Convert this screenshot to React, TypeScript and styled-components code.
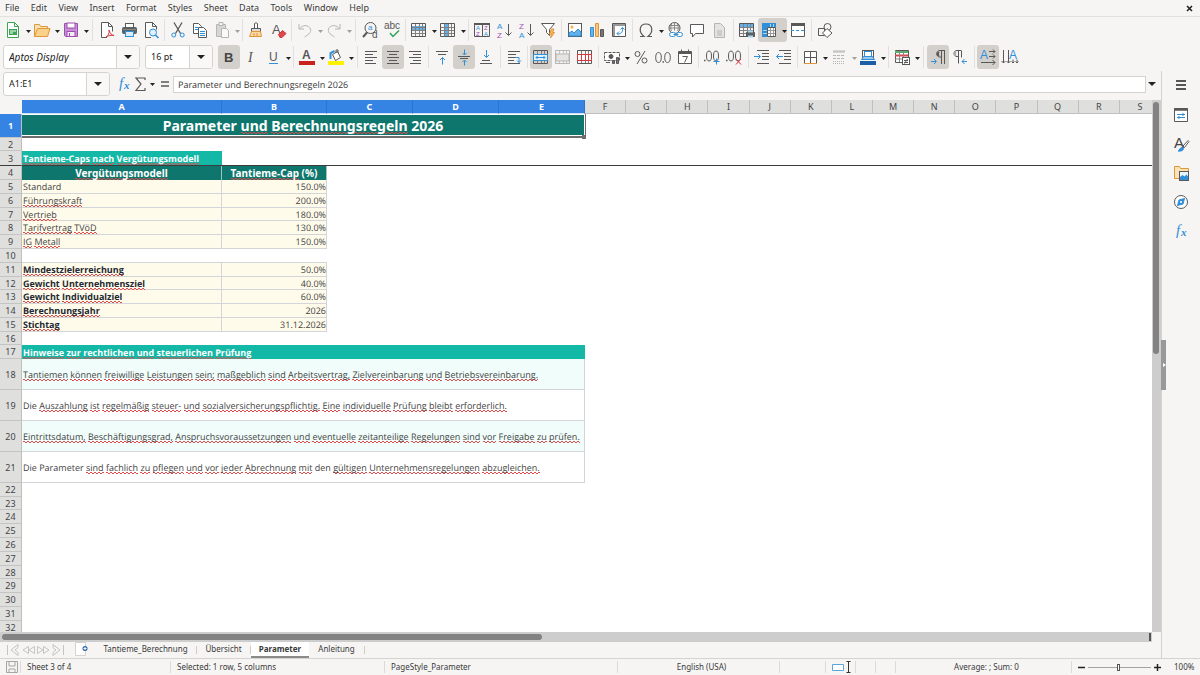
import React from "react";
import styled, { createGlobalStyle, css } from "styled-components";

const GlobalStyle = createGlobalStyle`
  * { box-sizing: border-box; }
  body { margin: 0; background: #f6f5f4; }
  button, input, select { font: inherit; color: inherit; margin: 0; }
`;

const ink = "#585858";
const blue = "#2f8fd8";
const rule = "#d5d3d0";

const App_ = styled.div`
  display: flex;
  flex-direction: column;
  height: 100vh;
  overflow: hidden;
  background: #f6f5f4;
  color: #3a3a3a;
  font: 9px/12px "Noto Sans", sans-serif;
`;

const MenuBar = styled.nav`
  display: flex;
  align-items: center;
  justify-content: space-between;
  height: 17px;
  padding: 0 7px 0 5px;
  border-bottom: 1px solid #e3e1df;
`;
const MenuList = styled.div`
  display: flex;
  justify-content: space-between;
  width: 364px;
`;
const MenuItem = styled.button`
  border: 0;
  padding: 0;
  background: none;
`;
const CloseButton = styled.button`
  display: flex;
  border: 0;
  padding: 0;
  background: none;
`;

const Toolbar = styled.div<{ $tall?: boolean }>`
  display: flex;
  flex: none;
  align-items: center;
  height: ${(p) => (p.$tall ? 28 : 26)}px;
  padding-left: ${(p) => (p.$tall ? 3 : 2)}px;
`;
const Sep = styled.span<{ $w?: number }>`
  flex: none;
  width: ${(p) => p.$w ?? 5}px;
  height: 22px;
  background: linear-gradient(#e2e0de, #e2e0de) center / 1px 100% no-repeat;
`;
const IconButton = styled.button<{ $on?: boolean; $off?: boolean }>`
  display: flex;
  flex: none;
  align-items: center;
  justify-content: center;
  width: 22px;
  height: 24px;
  border: 0;
  border-radius: 3px;
  padding: 0;
  background: ${(p) => (p.$on ? "#d3d0cc" : "none")};
  opacity: ${(p) => (p.$off ? 0.4 : 1)};
`;
const Split = styled.span<{ $on?: boolean; $off?: boolean }>`
  display: flex;
  flex: none;
  border-radius: 3px;
  background: ${(p) => (p.$on ? "#d3d0cc" : "none")};
  opacity: ${(p) => (p.$off ? 0.4 : 1)};
`;
const ArrowButton = styled.button`
  display: flex;
  align-items: center;
  justify-content: flex-end;
  width: 7px;
  height: 24px;
  border: 0;
  padding: 2px 0 0;
  background: none;
`;
const Combo = styled.div<{ $w: number; $gap?: number }>`
  display: flex;
  flex: none;
  width: ${(p) => p.$w}px;
  height: 24px;
  margin-right: ${(p) => p.$gap ?? 0}px;
  border: 1px solid ${rule};
  border-radius: 3px;
  background: #fff;
  overflow: hidden;
  button {
    display: flex;
    flex: none;
    align-items: center;
    justify-content: center;
    width: 23px;
    border: 0;
    border-left: 1px solid ${rule};
    padding: 0;
    background: #f9f8f7;
  }
`;
const ComboInput = styled.input<{ $italic?: boolean }>`
  flex: 1;
  min-width: 0;
  border: 0;
  padding: 0 0 0 5px;
  background: none;
  color: #222;
  font-size: ${(p) => (p.$italic ? 10 : 9)}px;
  font-style: ${(p) => (p.$italic ? "italic" : "normal")};
`;

const Middle = styled.div`
  display: flex;
  flex: 1;
  min-height: 0;
`;
const Workspace = styled.main`
  display: flex;
  flex: 1;
  flex-direction: column;
  min-width: 0;
`;
const FormulaBar = styled.div`
  display: flex;
  flex: none;
  align-items: center;
  height: 29px;
  padding: 0 4px 3px 3px;
`;
const FormulaInput = styled.input`
  flex: 1;
  min-width: 0;
  height: 17px;
  border: 1px solid ${rule};
  padding: 0 4px;
  background: #fff;
  font-family: "Open Sans", "Noto Sans", sans-serif;
  text-rendering: geometricPrecision;
`;
const FormulaIcon = styled.button<{ $w: number }>`
  display: flex;
  flex: none;
  align-items: center;
  justify-content: center;
  width: ${(p) => p.$w}px;
  height: 22px;
  border: 0;
  padding: 0;
  background: none;
`;

const SheetRow = styled.div`
  display: flex;
  flex: 1;
  min-height: 0;
`;
const SheetView = styled.div`
  flex: 1;
  min-width: 0;
  overflow: hidden;
  background: #fff;
`;
const VScroll = styled.div`
  width: 9px;
  padding: 2px 2px 0 1px;
  background: #cdcdcd;
`;
const VThumb = styled.div`
  height: calc(48% - 2px);
  border-radius: 3px;
  background: #818281;
`;
const HScroll = styled.div`
  display: flex;
  flex: none;
  align-items: center;
  justify-content: space-between;
  height: 10px;
  margin-right: 9px;
  padding: 0 1px 0 2px;
  background: #cdcdcd;
`;
const HThumb = styled.div`
  width: 47%;
  height: 6px;
  border-radius: 3px;
  background: #818281;
`;
const SplitGrip = styled.div`
  width: 2px;
  height: 8px;
  background: #555;
`;

const Grid = styled.table`
  width: 100%;
  table-layout: fixed;
  border-collapse: separate;
  border-spacing: 0;
  color: #444;
  line-height: 11px;
  td, th { padding: 0; white-space: nowrap; }
  td { font-family: "Open Sans", "Noto Sans", sans-serif; text-rendering: geometricPrecision; }
`;
const GridRow = styled.tr<{ $h: number; $frozen?: boolean }>`
  height: ${(p) => p.$h}px;
  ${(p) => p.$frozen && css`
    && > * { border-bottom: 1px solid #3c3c3c; }
  `}
`;
const ColHead = styled.th<{ $on?: boolean; $clipped?: boolean }>`
  border-right: 1px solid ${(p) => (p.$on ? "#2a76cf" : "#bfbfbe")};
  border-bottom: 1px solid ${(p) => (p.$on ? "#cfe0f5" : "#bfbfbe")};
  background: ${(p) => (p.$on ? "#3584e4" : "#dfdfde")};
  color: ${(p) => (p.$on ? "#fff" : "#444")};
  font-weight: ${(p) => (p.$on ? 700 : 400)};
  ${(p) => p.$clipped && css`
    && { border-right: 0; padding-left: 8px; }
  `}
`;
const Corner = styled.th`
  background: #f6f5f4;
`;
const RowHead = styled.th<{ $on?: boolean }>`
  border-right: 1px solid #bfbfbe;
  border-bottom: 1px solid #c4c4c3;
  background: ${(p) => (p.$on ? "#3584e4" : "#dfdfde")};
  color: ${(p) => (p.$on ? "#fff" : "#444")};
  font-weight: ${(p) => (p.$on ? 700 : 400)};
`;
const Selected = styled.td`
  position: relative;
  border: 1px solid #fff;
  border-width: 1px 1px 0 0;
  background: #0f766e;
  box-shadow: inset 0 -2px #6d6d6d, inset 0 -3px #fff;
  color: #fff;
  font-size: 14px;
  font-weight: 700;
  line-height: 18px;
  text-align: center;
  && { padding-bottom: 2px; font-family: "Noto Sans", sans-serif; text-rendering: auto; }
  &::after {
    content: "";
    position: absolute;
    right: -2px;
    bottom: -1px;
    width: 4px;
    height: 4px;
    background: #6d6d6d;
  }
`;
const SelectionEdge = styled.td`
  background: linear-gradient(#6d6d6d, #6d6d6d) left / 1px 100% no-repeat;
`;
const Section = styled.td`
  padding-left: 1px !important;
  background: #14b8a6;
  color: #fff;
  font-weight: 700;
`;
const TableHead = styled.th`
  border-right: 1px solid #9fc4c0;
  background: #0f766e;
  color: #fff;
  font-size: 10px;
  font-weight: 700;
`;
const InputCell = styled.td<{ $right?: boolean; $bold?: boolean }>`
  border-right: 1px solid #d3d5d8;
  border-bottom: 1px solid #d3d5d8;
  padding: ${(p) => (p.$right ? "0" : "0 0 0 1px")} !important;
  background: #fffbeb;
  color: ${(p) => (p.$bold ? "#222831" : "#444")};
  font-weight: ${(p) => (p.$bold ? 700 : 400)};
  text-align: ${(p) => (p.$right ? "right" : "left")};
`;
const GapCell = styled.td`
  border-bottom: 1px solid #d3d5d8;
`;
const NoteCell = styled.td<{ $tint?: boolean }>`
  border-right: 1px solid #d3d5d8;
  border-bottom: 1px solid #d3d5d8;
  padding-left: 1px !important;
  background: ${(p) => (p.$tint ? "#f0fdfa" : "#fff")};
`;
const Misspelt = styled.span<{ $large?: boolean }>`
  background:
    repeating-linear-gradient(90deg, #e04a4a 0 2px, transparent 2px 4px) 0 calc(100% - ${(p) => (p.$large ? 2 : 1)}px) / 100% 1px no-repeat,
    repeating-linear-gradient(90deg, transparent 0 2px, #e04a4a 2px 4px) 0 calc(100% - ${(p) => (p.$large ? 1 : 0)}px) / 100% 1px no-repeat;
`;

const TabBar = styled.div`
  display: flex;
  flex: none;
  align-items: center;
  height: 16px;
  padding-left: 6px;
  font-size: 8px;
`;
const TabNav = styled.button`
  display: flex;
  width: 15px;
  border: 0;
  padding: 0;
  background: none;
`;
const Tab = styled.button<{ $on?: boolean; $w: number }>`
  flex: none;
  width: ${(p) => p.$w}px;
  height: 16px;
  border: 0;
  border-bottom: 2px solid ${(p) => (p.$on ? "#8b8b8a" : "transparent")};
  padding: 0;
  background: ${(p) => (p.$on ? "#fff" : "none")};
  font-weight: ${(p) => (p.$on ? 700 : 400)};
`;
const TabLine = styled.span`
  width: 1px;
  height: 8px;
  background: #cfcdca;
`;

const Sidebar = styled.aside`
  display: flex;
  flex: none;
  align-items: center;
  width: 39px;
  border-left: 1px solid ${rule};
`;
const SideGrip = styled.button`
  display: flex;
  align-items: center;
  justify-content: center;
  width: 5px;
  height: 50px;
  margin-left: -1px;
  border: 0;
  padding: 0;
  background: #999;
`;
const SideIcons = styled.div`
  display: flex;
  flex: 1;
  flex-direction: column;
  align-self: stretch;
  align-items: center;
  padding: 1px 4px 0 0;
`;
const SideButton = styled.button<{ $first?: boolean }>`
  display: flex;
  align-items: center;
  justify-content: center;
  width: 24px;
  height: 29px;
  margin-bottom: ${(p) => (p.$first ? 1 : 0)}px;
  border: 0;
  padding: 0 0 3px;
  background: none;
`;

const StatusBar = styled.footer`
  display: grid;
  flex: none;
  grid-template-columns: 21px 150px 214px 1fr 162px 46px 30px 20px 20px 176px 96px 32px;
  align-items: center;
  height: 17px;
  border-top: 1px solid ${rule};
  font-size: 8px;
`;
const StatusCell = styled.div<{ $center?: boolean; $plain?: boolean }>`
  display: flex;
  align-items: center;
  justify-content: ${(p) => (p.$center ? "center" : "flex-start")};
  gap: 3px;
  height: 12px;
  padding: 0 0 0 6px;
  border-right: 1px solid ${(p) => (p.$plain ? "transparent" : "#dddbd8")};
  white-space: nowrap;
  svg { flex: none; }
`;
const ZoomCell = styled(StatusCell)`
  padding-right: 6px;
`;
const Zoom = styled.input`
  flex: 1;
  min-width: 0;
  height: 8px;
  appearance: none;
  background: linear-gradient(#a3a3a2, #a3a3a2) center / 100% 1px no-repeat;
  &::-webkit-slider-thumb {
    appearance: none;
    width: 3px;
    height: 7px;
    border: 1px solid #555;
    background: #fff;
  }
`;
const ZoomButton = styled.button`
  display: flex;
  border: 0;
  padding: 0;
  background: none;
`;

const IconSvg = styled.svg`
  overflow: visible;
`;
const Caret = ({ big }: { big?: boolean }) => (
  <svg width={big ? 8 : 5} height={big ? 4 : 3} viewBox="0 0 8 4" preserveAspectRatio="none" aria-hidden="true">
    <path d="M0 0h8L4 4z" fill="#222" />
  </svg>
);
const Glyph = ({ x, y, s, c = ink, f = "Liberation Sans", children, b, i }: any) => (
  <text x={x} y={y} fontSize={s} fill={c} stroke="none" fontFamily={`"${f}", sans-serif`} fontWeight={b ? 700 : 400} fontStyle={i ? "italic" : "normal"}>
    {children}
  </text>
);

const TableLines = () => (
  <>
    <path d="M2 9.500h13M2 12.500h13M5.500 6v9M9.500 6v9M12.500 6v9M5.500 3v3M9.500 3v3M12.500 3v3M2 6.500h13" stroke="#808080" />
    <path d="M1.500 2.500h14v13h-14z" />
  </>
);

const icons: Record<string, React.ReactNode> = {
  new: <><path d="M3.500 1.500h7l4 4v11h-11z" stroke="#3aa655" fill="#fff" /><path d="M10.500 1.500v4h4" stroke="#3aa655" /><rect x="5" y="8" width="8" height="6" fill="#3aa655" stroke="none" /><path d="M6 10h6M6 12h3" stroke="#fff" /></>,
  open: <><path d="M1.500 15.500v-12h5l1 2h7v3" stroke="#d99a3c" fill="#fbe3b5" /><path d="M1.500 15.500l3-8h12.500l-2.500 8z" fill="#fbd08a" stroke="#e0963a" /></>,
  save: <><path d="M2.500 2.500h13v13h-12l-1-1z" fill="#c88fd4" stroke="#9b4fae" /><rect x="5" y="2" width="8" height="5" fill="#fff" stroke="#9b4fae" /><rect x="5" y="10.500" width="8" height="5" fill="#f6e9f8" stroke="#9b4fae" /><path d="M7.500 12v3" stroke="#9b4fae" /></>,
  pdf: <><path d="M9 16.500H3.500v-15h7l4 4v5" fill="#fff" /><path d="M10.500 1.500v4h4" /><path d="M8 16c2.500-1.500 3.500-4 3-7 1 3.500 2.500 5 5 5.500-3-.5-5.500 0-8 1.500z" stroke="#d9363e" /></>,
  print: <><rect x="5.500" y="2.500" width="8" height="4" fill="#fff" /><rect x="2.500" y="6.500" width="14" height="6" rx="1" fill="#5c6164" stroke="#5c6164" /><path d="M3 8.500h13" stroke="#82878a" /><rect x="5.500" y="10.500" width="8" height="5" fill="#d8ecfa" stroke={blue} /></>,
  preview: <><path d="M9 16.500H3.500v-15h7l4 4v3" fill="#fff" /><path d="M10.500 1.500v4h4" /><circle cx="11" cy="11.500" r="3.500" fill="#dff0fc" stroke={blue} /><path d="M13.500 14l3 3" stroke={blue} strokeWidth="1.500" /></>,
  cut: <><path d="M5 1.500l6.500 11M13 1.500l-6.500 11" strokeWidth="1.300" /><circle cx="4.800" cy="14" r="2" stroke={blue} /><circle cx="13.200" cy="14" r="2" stroke={blue} /></>,
  copy: <><path d="M2.500 2.500h5l3 3v7h-8z" fill="#fff" /><path d="M4 6.500h3M4 8.500h3" stroke={blue} /><path d="M7.500 6.500h5l3 3v7h-8z" fill="#fff" /><path d="M9 10.500h5M9 12.500h5M9 14.500h5" stroke={blue} /></>,
  paste: <><path d="M3.500 3.500h9v12h-9z" fill="#a8a8a8" /><path d="M6 1.500h4v3H6z" fill="#eee" /><path d="M8.500 7.500h5l2 2v7h-7z" fill="#fff" /></>,
  brush: <><path d="M7.500 2.500q1.500-1.500 3 0v5h-3z" fill="#fff" /><path d="M4.500 7.500h9v3h-9z" fill="#ddd" /><path d="M4.500 10.500h9l1 5h-12z" fill="#fbd9a3" stroke="#e0963a" /><path d="M7 12v3M10 12v3" stroke="#e0963a" /></>,
  clear: <><Glyph x="3" y="13" s="13">A</Glyph><path d="M9.500 13.500l4-4 3.500 3-4 4h-2z" fill="#e0454b" stroke="#c9363c" /></>,
  undo: <path d="M3 3v5h5M3.500 8c2-4 9-5 11 0 1 4-3 6-6 8" />,
  redo: <path d="M15 3v5h-5M14.500 8c-2-4-9-5-11 0-1 4 3 6 6 8" />,
  find: <><path d="M6 11.500L2 16" strokeWidth="2" /><circle cx="9.500" cy="7" r="5.500" /><Glyph x="7" y="9" s="8" c={blue}>a</Glyph><Glyph x="11" y="17" s="10">d</Glyph></>,
  spell: <><Glyph x="1" y="8" s="10">abc</Glyph><path d="M7 12l3 3.500 6-6" stroke="#2ea35a" strokeWidth="1.500" /></>,
  row: <><rect x="2" y="5" width="13" height="5" fill="#63b1e8" stroke="none" /><TableLines /></>,
  col: <><rect x="5" y="3" width="5" height="12" fill="#63b1e8" stroke="none" /><TableLines /></>,
  sort: <><path d="M1.500 2.500h15v13h-15zM9.500 3v13" /><path d="M1 3h16" strokeWidth="2" /><Glyph x="3" y="9" s="6" c={blue}>A</Glyph><Glyph x="3" y="15" s="6" c="#a24fb8">Z</Glyph><Glyph x="11" y="9" s="6" c="#a24fb8">Z</Glyph><Glyph x="11" y="15" s="6" c={blue}>A</Glyph></>,
  asc: <><Glyph x="2" y="8" s="8" c={blue}>A</Glyph><Glyph x="2" y="17" s="8" c="#a24fb8">Z</Glyph><path d="M13.500 3v11M10.500 11.500l3 3 3-3" /></>,
  desc: <><Glyph x="2" y="8" s="8" c="#a24fb8">Z</Glyph><Glyph x="2" y="17" s="8" c={blue}>A</Glyph><path d="M13.500 3v11M10.500 11.500l3 3 3-3" /></>,
  filter: <><path d="M2.500 2.500h13l-5 6v6l-3-3v-3z" fill="#fff" /><path d="M12.500 8l-2 5h2l-1 4 4-5.500h-2l1.500-3.500z" fill="#fbb658" stroke="#e0963a" /></>,
  image: <><rect x="2.500" y="2.500" width="13" height="13" fill="#fff" /><circle cx="6" cy="6" r="1.500" fill="#f4b04f" stroke="none" /><path d="M3 15v-3l3-2 2 2 4-4 3 3v4z" fill="#63b1e8" stroke={blue} /></>,
  chart: <><path d="M2.500 6.500h3v9h-3z" fill="#6ab3e6" stroke={blue} /><path d="M7.500 2.500h3v13h-3z" fill="#fbc77c" stroke="#e0963a" /><path d="M12.500 8.500h3v7h-3z" fill="#777" /></>,
  pivot: <><path d="M2.500 2.500h13v13h-13z" fill="#fff" /><path d="M3 4h12M4 3v12" stroke="#999" strokeWidth="2" /><path d="M7 12.500c4 1 6-1 5.500-5.500M10.500 8.500l2-2 2 2M9 10.500l-2 2 2 2" stroke={blue} /></>,
  omega: <path d="M3 15.500h4c-6-5-4.500-12.500 2-12.500s8 7.500 2 12.500h4" strokeWidth="1.200" />,
  link: <><circle cx="8.500" cy="7" r="5.500" /><path d="M3 7h11M8.500 1.500v8M5.500 3c-1 3-1 5 0 7M11.500 3c1 3 1 5 0 7M4 4.500h9" stroke="#888" /><rect x="3.500" y="11.500" width="6" height="4" rx="2" fill="#fff" stroke={blue} /><rect x="10.500" y="11.500" width="6" height="4" rx="2" fill="#fff" stroke={blue} /><path d="M7.500 13.500h5" stroke={blue} /></>,
  comment: <path d="M2.500 3.500h13v9h-8l-3 3.500v-3.500h-2z" fill="#fff" />,
  page: <><path d="M4.500 2.500h6l4 4v10h-10z" fill="#c9c9c9" /><path d="M7 10h5M7 12h5M7 14h5" /></>,
  headers: <><rect x="2" y="3" width="13" height="4" fill="#63b1e8" stroke="none" /><TableLines /><path d="M8.500 11.500h8v4h-8z" fill="#5c6164" /><path d="M10 10.500h5M10 15.500h5" stroke="#a8d5f3" strokeWidth="2" /></>,
  freeze: <><rect x="2" y="2" width="14" height="4" fill={blue} stroke="none" /><rect x="2" y="2" width="5" height="14" fill={blue} stroke="none" /><path d="M7.500 6.500h8v9h-8z" fill="#fff" /><path d="M8 9.500h7M8 12.500h7M10.500 7v8M13.500 7v8" stroke="#999" /><path d="M10.500 3v3M13.500 3v3M3 9.500h4M3 12.500h4" stroke="#a8d5f3" /></>,
  splitw: <><path d="M2.500 2.500h13v13h-13z" fill="#fff" /><path d="M2 3.500h14" strokeWidth="3" /><path d="M2 9.500h14" stroke={blue} strokeDasharray="3 2" /></>,
  shapes: <><path d="M2.500 7.500h6v7h-6z" /><circle cx="11.500" cy="6" r="3.500" /><path d="M11 7.500l5 4.500-5 4.500-4.500-4.500z" fill="#fff" /></>,
  bold: <Glyph x="4" y="14" s="13" b c="#444">B</Glyph>,
  italic: <Glyph x="6" y="14" s="14" f="Liberation Serif" i>I</Glyph>,
  underline: <><Glyph x="5" y="13" s="12">U</Glyph><path d="M5 15.500h9" stroke={blue} /></>,
  fontColor: <><Glyph x="4" y="11" s="12" b>A</Glyph><rect x="1" y="13" width="16" height="4" fill="#c9211e" stroke="none" /></>,
  highlight: <><path d="M5.500 6.500l5-3 3 6-5 3z" fill="#fff" /><path d="M9 5V2h2v3" /><path d="M3.500 11V5l4-2" stroke={blue} strokeWidth="2" /><rect x="1" y="13" width="16" height="4" fill="#fff200" stroke="none" /></>,
  left: <path d="M3 3.500h12M3 6.500h8M3 9.500h12M3 12.500h8M3 15.500h11" />,
  center: <path d="M3 3.500h12M5 6.500h8M3 9.500h12M5 12.500h8M3 15.500h12" />,
  right: <path d="M3 3.500h12M7 6.500h8M3 9.500h12M7 12.500h8M4 15.500h11" />,
  top: <><path d="M3 3.500h12M5 6.500h8" /><path d="M9.500 16.500V9.500M7 12l2.500-2.500L12 12" stroke={blue} /></>,
  mid: <><path d="M3 8.500h12M5 10.500h8" /><path d="M9.500 1.500v5M7.500 5l2 2 2-2M9.500 17.500v-5M7.500 14l2-2 2 2" stroke={blue} /></>,
  bottom: <><path d="M5 12.500h8M3 15.500h12" /><path d="M9.500 2v7M7 7l2.500 2.500L12 7" stroke={blue} /></>,
  wrap: <><path d="M3 3.500h12M3 6.500h8M3 9.500h7M3 12.500h6M3 15.500h12" /><path d="M10 9.500h4v5M12 12.500l2 2 2-2" stroke={blue} /></>,
  merge: <><TableLines /><rect x="1.500" y="6.500" width="14" height="6" fill="#e4f2fc" stroke={blue} /><path d="M4 9.500h9M5.500 8l-1.500 1.500 1.500 1.500M11.500 8l1.500 1.500-1.500 1.500" stroke={blue} /></>,
  mergeOff: <><TableLines /><rect x="2" y="6" width="13" height="7" fill="#ccc" /></>,
  unmerge: <><TableLines /><path d="M1.500 6.500h14v6h-14zM5.500 6.500v6M9.500 6.500v6M12.500 6.500v6" fill="#fff" stroke="#d9363e" /></>,
  currency: <><path d="M1.500 4.500h15v8h-15z" fill="#fff" strokeDasharray="3 1" /><circle cx="8" cy="8.500" r="2" fill={ink} /><path d="M9.500 12.500h2v3h-2zM13.500 9.500h2v6h-2z" fill="#777" /><path d="M3 14.500h4" /></>,
  percent: <><circle cx="5.500" cy="6" r="2.500" /><circle cx="12.500" cy="12.500" r="2.500" /><path d="M13 3L5 16" /></>,
  decimal: <><ellipse cx="4.500" cy="9.500" rx="2.800" ry="5" /><ellipse cx="13.500" cy="9.500" rx="2.800" ry="5" /><path d="M8.500 14h1.500" strokeWidth="1.500" /></>,
  date: <><path d="M2.500 3.500h13v12h-13z" fill="#fff" /><path d="M2 5h14" strokeWidth="2" /><path d="M5.500 1.500v3M12.500 1.500v3" /><path d="M6.500 8.500h5l-3 6" /></>,
  addDec: <><path d="M1 12.500h1.500" strokeWidth="1.500" /><ellipse cx="6" cy="8" rx="2.500" ry="5" /><ellipse cx="13" cy="8" rx="2.500" ry="5" /><path d="M13.500 10.500v6M10.500 13.500h6" stroke={blue} /></>,
  delDec: <><path d="M1 12.500h1.500" strokeWidth="1.500" /><ellipse cx="6" cy="8" rx="2.500" ry="5" /><ellipse cx="13" cy="8" rx="2.500" ry="5" /><path d="M11 11l5 5.500M16 11l-5 5.500" stroke="#d9363e" /></>,
  indent: <><path d="M4 2.500h12M9 5.500h7M9 8.500h7M9 11.500h7M4 15.500h12" /><path d="M1 8.500h6M5 6l2.500 2.500L5 11" stroke={blue} /></>,
  outdent: <><path d="M4 2.500h12M9 5.500h7M9 8.500h7M9 11.500h7M4 15.500h12" /><path d="M8 8.500H1.500M4 6L1.500 8.500 4 11" stroke={blue} /></>,
  borders: <><path d="M3.500 3.500h12v12h-12z" fill="#fff" /><path d="M9.500 3v12M3 9.500h12" /><path d="M3 15.500h13" stroke="#e0963a" /></>,
  borderStyle: <><path d="M3 3h12M3 4h12" /><path d="M3 7.500h12M3 10.500h12" strokeDasharray="3 1" /><path d="M3 13.500h12M3 15.500h12" strokeDasharray="1 1" /></>,
  borderColor: <><rect x="3.500" y="2.500" width="11" height="8" fill="#fff" /><path d="M2.500 11.500l2-3h9l2 3z" fill="#9cc7e8" stroke={blue} /><rect x="5.500" y="3.500" width="7" height="5" fill="#fff" stroke={blue} /><rect x="1" y="13" width="16" height="4" fill="#1c5da8" stroke="none" /></>,
  conditional: <><path d="M2.500 2.500h13v12h-13z" fill="#fff" /><path d="M2 4h13" stroke="#58b368" strokeWidth="2" /><path d="M2 7.500h13" stroke="#e0454b" strokeWidth="2" /><path d="M2 11h8M6.500 3v11M10.500 3v6" stroke="#888" /><rect x="9.500" y="9.500" width="7" height="7" fill="#fff" /><path d="M11 12.500h4M11 14.500h4M14.500 11l-3 4.500" /></>,
  ltr: <><path d="M16 2.500h-5c-4.500 0-4.500 6.500 0 6.500h1M12.500 3v13M15.500 3v13" /><path d="M10 4c-1.500 1-1.500 3 0 4" strokeWidth="2" /><path d="M2 13.500h5M5 11l2.500 2.500L5 16" stroke={blue} /></>,
  rtl: <><path d="M10 2.500H6c-4 0-4 6 0 6h1M7.500 2.500v13M10.500 2.500v7" /><path d="M5 4c-1.500 1-1.500 3 0 4" strokeWidth="2" stroke="#aaa" /><path d="M16 13.500h-5M13.500 11L11 13.500l2.500 2.500" stroke={blue} /></>,
  textH: <><Glyph x="1" y="11" s="12" c={blue}>A</Glyph><path d="M10 3.500h6M14 1.500l2 2-2 2M10 8.500h6M14 6.500l2 2-2 2M2 14.500h14M13.500 12l2.500 2.500-2.500 2.500" /></>,
  textV: <><Glyph x="8" y="11" s="12" c={blue}>A</Glyph><path d="M2.500 2v13M.5 13l2 2 2-2M7.500 2v13M5.500 13l2 2 2-2M12 11.500v3.500M10.500 13.500l1.500 1.500 1.500-1.500M16 11.500v3.500M14.500 13.500l1.500 1.500 1.500-1.500" /></>,
  fx: <><Glyph x="4" y="13" s="15" c={blue} f="Liberation Serif" i>f</Glyph><Glyph x="9" y="14" s="11" c={blue} f="Liberation Serif" i b>x</Glyph></>,
  sigma: <path d="M13 5V3H4l5 6-5 6.500h9V13" strokeWidth="1.200" />,
  equals: <path d="M5 7h8M5 11h8" strokeWidth="1.500" />,
  menu: <path d="M4 5h10M4 9h10M4 13h10" stroke="#222" strokeWidth="1.600" />,
  props: <><path d="M2.500 2.500h13v13h-13z" fill="#fff" /><path d="M2 3.500h14" strokeWidth="2.500" /><path d="M5 8.500h8M5 11.500h8M11 7v3M7 10v3" stroke={blue} /></>,
  styles: <><Glyph x="2" y="13" s="15" c="#444">A</Glyph><path d="M11 11l5-5.500 1 1-4.500 6z" fill="#fff" /><path d="M6 16c1 0 2-4 4.500-3.500S11 17 6 16z" fill={blue} stroke={blue} /></>,
  gallery: <><path d="M2.500 14.500v-12h5l1 2h8v3h-9v7z" fill="#fbe3b5" stroke="#e0963a" /><rect x="7.500" y="7.500" width="9" height="9" fill="#e9f4fc" /><path d="M8 16v-3l2.500-2 2 1.500 2-2 1.500 2V16z" fill={blue} stroke="none" /></>,
  navigator: <><circle cx="9" cy="9" r="6.500" fill="#fff" /><path d="M12.500 5.500l-1.500 5.500-5.500 1.500 1.500-5.500z" fill={blue} stroke={blue} /><circle cx="9" cy="9" r="1" fill="#fff" stroke="none" /></>,
};

const Icon = ({ name }: { name: string }) => (
  <IconSvg width="18" height="18" viewBox="0 0 18 18" fill="none" stroke={ink} aria-hidden="true">
    {icons[name]}
  </IconSvg>
);
const Tool = ({ n, on, off }: { n: string; on?: boolean; off?: boolean }) => (
  <IconButton $on={on} $off={off} aria-label={n}><Icon name={n} /></IconButton>
);
const SplitTool = ({ n, on, off }: { n: string; on?: boolean; off?: boolean }) => (
  <Split $on={on} $off={off}>
    <IconButton aria-label={n}><Icon name={n} /></IconButton>
    <ArrowButton aria-label={`${n} options`}><Caret /></ArrowButton>
  </Split>
);

/* Words the spell checker accepts are wrapped in braces. */
const Spell = ({ text, large }: { text: string; large?: boolean }) => (
  <>
    {text.split(" ").map((word, i) => (
      <React.Fragment key={i}>
        {i > 0 && " "}
        {word.startsWith("{") ? word.slice(1, -1) : <Misspelt $large={large}>{word}</Misspelt>}
      </React.Fragment>
    ))}
  </>
);

const caps = [
  ["{Standard}", "150.0%"],
  ["Führungskraft", "200.0%"],
  ["Vertrieb", "180.0%"],
  ["Tarifvertrag TVöD", "130.0%"],
  ["IG Metall", "150.0%"],
];
const settings = [
  ["Mindestzielerreichung", "50.0%"],
  ["Gewicht Unternehmensziel", "40.0%"],
  ["Gewicht Individualziel", "60.0%"],
  ["Berechnungsjahr", "2026"],
  ["Stichtag", "31.12.2026"],
];
const notes = [
  "Tantiemen können freiwillige Leistungen sein; maßgeblich sind Arbeitsvertrag, Zielvereinbarung und Betriebsvereinbarung.",
  "{Die} Auszahlung ist regelmäßig steuer- und sozialversicherungspflichtig. Eine individuelle Prüfung bleibt erforderlich.",
  "Eintrittsdatum, Beschäftigungsgrad, Anspruchsvoraussetzungen und eventuelle zeitanteilige Regelungen sind vor Freigabe zu prüfen.",
  "{Die} {Parameter} sind fachlich zu pflegen und vor jeder Abrechnung mit {den} gültigen Unternehmensregelungen abzugleichen.",
];
const columns = "ABCDEFGHIJKLMNOPQRS".split("");
const colWidths: Record<string, number> = { A: 200, B: 105, C: 86, D: 86, E: 86, S: 32 };
const shortRows = [2, 7, 12, 16, 23, 28];
const rowHeight = (n: number) =>
  n === 1 ? 24 : n === 3 ? 15 : n >= 18 && n <= 21 ? 31 : shortRows.includes(n) ? 13 : 14;

const rowCells = (n: number): React.ReactNode => {
  if (n === 1)
    return <><Selected colSpan={5}><Spell large text="{Parameter} und Berechnungsregeln {2026}" /></Selected><SelectionEdge colSpan={14} /></>;
  if (n === 3)
    return <><Section><Spell text="Tantieme-Caps nach Vergütungsmodell" /></Section><td colSpan={18} /></>;
  if (n === 4)
    return <><TableHead><Spell text="Vergütungsmodell" /></TableHead><TableHead><Spell text="Tantieme-Cap {(%)}" /></TableHead><td colSpan={17} /></>;
  if (n === 10) return <><GapCell colSpan={2} /><td colSpan={17} /></>;
  if ((n >= 5 && n <= 9) || (n >= 11 && n <= 15)) {
    const bold = n > 10;
    const [label, value] = bold ? settings[n - 11] : caps[n - 5];
    return <><InputCell $bold={bold}><Spell text={label} /></InputCell><InputCell $right>{value}</InputCell><td colSpan={17} /></>;
  }
  if (n === 17)
    return <><Section colSpan={5}><Spell text="Hinweise zur rechtlichen und steuerlichen Prüfung" /></Section><td colSpan={14} /></>;
  if (n >= 18 && n <= 21)
    return <><NoteCell colSpan={5} $tint={n % 2 === 0}><Spell text={notes[n - 18]} /></NoteCell><td colSpan={14} /></>;
  return <td colSpan={19} />;
};

const menus = ["File", "Edit", "View", "Insert", "Format", "Styles", "Sheet", "Data", "Tools", "Window", "Help"];
const tabArrows = [
  "M1.500 2v10M4 6h0M12 1.500L5 7l7 5.500V9.500L9 7l3-2.500z",
  "M7.500 3.500L2 7l5.500 3.500zM13.500 3.500L8 7l5.500 3.500z",
  "M1.500 3.500L7 7l-5.500 3.500zM7.500 3.500L13 7l-5.500 3.500z",
  "M12.500 2v10M2 1.500L9 7l-7 5.500V9.500L5 7 2 4.500z",
];

export default function App() {
  return (
    <App_>
      <GlobalStyle />
      <MenuBar>
        <MenuList>{menus.map((m) => <MenuItem key={m}>{m}</MenuItem>)}</MenuList>
        <CloseButton aria-label="Close"><svg width="7" height="7" viewBox="0 0 7 7"><path d="M1 1l5 5M6 1L1 6" stroke="#222" strokeWidth="1.600" /></svg></CloseButton>
      </MenuBar>

      <Toolbar role="toolbar">
        <SplitTool n="new" /><SplitTool n="open" /><SplitTool n="save" />
        <Sep $w={7} />
        <Tool n="pdf" /><Tool n="print" /><Tool n="preview" />
        <Sep />
        <Tool n="cut" /><Tool n="copy" /><SplitTool n="paste" off />
        <Sep />
        <Tool n="brush" /><Tool n="clear" />
        <Sep />
        <SplitTool n="undo" off /><SplitTool n="redo" off />
        <Sep $w={7} />
        <Tool n="find" /><Tool n="spell" />
        <Sep />
        <SplitTool n="row" /><SplitTool n="col" />
        <Sep />
        <Tool n="sort" /><Tool n="asc" /><Tool n="desc" /><Tool n="filter" />
        <Sep />
        <Tool n="image" /><Tool n="chart" /><Tool n="pivot" />
        <Sep />
        <SplitTool n="omega" /><Tool n="link" /><Tool n="comment" /><Tool n="page" off />
        <Sep $w={6} />
        <Tool n="headers" /><SplitTool n="freeze" on /><Tool n="splitw" />
        <Sep />
        <Tool n="shapes" />
      </Toolbar>

      <Toolbar role="toolbar" $tall>
        <Combo $w={137} $gap={5}><ComboInput $italic aria-label="Font name" defaultValue="Aptos Display" /><button aria-label="Fonts"><Caret big /></button></Combo>
        <Combo $w={68} $gap={5}><ComboInput aria-label="Font size" defaultValue="16 pt" /><button aria-label="Sizes"><Caret big /></button></Combo>
        <Tool n="bold" on /><Tool n="italic" /><SplitTool n="underline" />
        <Sep />
        <SplitTool n="fontColor" /><SplitTool n="highlight" />
        <Sep $w={6} />
        <Tool n="left" /><Tool n="center" on /><Tool n="right" />
        <Sep />
        <Tool n="top" /><Tool n="mid" on /><Tool n="bottom" />
        <Sep $w={6} />
        <Tool n="wrap" />
        <Sep />
        <Tool n="merge" on /><Tool n="mergeOff" off /><Tool n="unmerge" />
        <Sep />
        <SplitTool n="currency" /><Tool n="percent" /><Tool n="decimal" /><Tool n="date" />
        <Sep />
        <Tool n="addDec" /><Tool n="delDec" />
        <Sep $w={6} />
        <Tool n="indent" /><Tool n="outdent" />
        <Sep $w={4} />
        <SplitTool n="borders" /><SplitTool n="borderStyle" off /><SplitTool n="borderColor" />
        <Sep />
        <SplitTool n="conditional" />
        <Sep $w={7} />
        <Tool n="ltr" on /><Tool n="rtl" />
        <Sep $w={6} />
        <Tool n="textH" on /><Tool n="textV" />
      </Toolbar>

      <Middle>
        <Workspace>
          <FormulaBar>
            <Combo $w={107} $gap={5}><ComboInput aria-label="Name box" defaultValue="A1:E1" /><button aria-label="Names"><Caret big /></button></Combo>
            <FormulaIcon $w={18} aria-label="Function wizard"><Icon name="fx" /></FormulaIcon>
            <FormulaIcon $w={15} aria-label="Sum"><Icon name="sigma" /></FormulaIcon>
            <FormulaIcon $w={8} aria-label="Sum options"><Caret /></FormulaIcon>
            <FormulaIcon $w={17} aria-label="Formula"><Icon name="equals" /></FormulaIcon>
            <FormulaInput aria-label="Input line" defaultValue="Parameter und Berechnungsregeln 2026" />
            <FormulaIcon $w={11} aria-label="Expand"><Caret big /></FormulaIcon>
          </FormulaBar>
          <SheetRow>
            <SheetView>
              <Grid>
                <colgroup>
                  <col width={22} />
                  {columns.map((c) => <col key={c} width={colWidths[c]} />)}
                </colgroup>
                <thead>
                  <GridRow $h={14}>
                    <Corner />
                    {columns.map((c, i) => <ColHead key={c} $on={i < 5} $clipped={c === "S"}>{c}</ColHead>)}
                  </GridRow>
                </thead>
                <tbody>
                  {Array.from({ length: 32 }, (_, i) => i + 1).map((n) => (
                    <GridRow key={n} $h={rowHeight(n)} $frozen={n === 3}>
                      <RowHead $on={n === 1}>{n}</RowHead>
                      {rowCells(n)}
                    </GridRow>
                  ))}
                </tbody>
              </Grid>
            </SheetView>
            <VScroll><VThumb /></VScroll>
          </SheetRow>
          <HScroll><HThumb /><SplitGrip /></HScroll>
          <TabBar>
            {tabArrows.map((d) => (
              <TabNav key={d} aria-label="Scroll tabs"><svg width="14" height="14" viewBox="0 0 14 14"><path d={d} fill="none" stroke="#c4c4c2" /></svg></TabNav>
            ))}
            <Tab $w={29} aria-label="Add sheet">
              <svg width="14" height="14" viewBox="0 0 14 14"><path d="M1.500 .5h10v13h-10z" fill="#fff" stroke="#d5d3d0" /><circle cx="11" cy="6.500" r="2.500" fill="#2c67b5" /><path d="M9.500 6.500h3M11 5v3" stroke="#fff" /></svg>
            </Tab>
            <Tab $w={101}>Tantieme_Berechnung</Tab><TabLine />
            <Tab $w={53}>Übersicht</Tab><TabLine />
            <Tab $w={58} $on>Parameter</Tab>
            <Tab $w={55}>Anleitung</Tab><TabLine />
          </TabBar>
        </Workspace>
        <Sidebar>
          <SideGrip aria-label="Hide sidebar"><svg width="4" height="4" viewBox="0 0 4 4"><path d="M1 0l3 2-3 2z" fill="#fff" /></svg></SideGrip>
          <SideIcons>
            {["menu", "props", "styles", "gallery", "navigator", "fx"].map((n, i) => (
              <SideButton key={n} $first={i === 0} aria-label={n}><Icon name={n} /></SideButton>
            ))}
          </SideIcons>
        </Sidebar>
      </Middle>

      <StatusBar>
        <StatusCell>
          <svg width="12" height="12" viewBox="0 0 12 12" fill="none" stroke="#a5a5a4"><path d="M.5 .5h11v11H.5zM3 1v4h6V1M3 11V8h6v3" /></svg>
        </StatusCell>
        <StatusCell>Sheet 3 of 4</StatusCell>
        <StatusCell>Selected: 1 row, 5 columns</StatusCell>
        <StatusCell>PageStyle_Parameter</StatusCell>
        <StatusCell $center>English (USA)</StatusCell>
        <StatusCell />
        <StatusCell>
          <svg width="20" height="12" viewBox="0 0 20 12" fill="none"><path d="M.5 3.500h11v6H.5z" stroke="#5ba7dc" fill="#fff" /><path d="M14.500 .5h4M14.500 11.500h4M16.500 1v10" stroke="#333" /></svg>
        </StatusCell>
        <StatusCell /><StatusCell />
        <StatusCell $center>Average: ; Sum: 0</StatusCell>
        <ZoomCell $plain>
          <ZoomButton aria-label="Zoom out"><svg width="7" height="7" viewBox="0 0 7 7"><path d="M0 3.500h7" stroke="#222" strokeWidth="1.500" /></svg></ZoomButton>
          <Zoom type="range" aria-label="Zoom" min={0} max={100} defaultValue={48} />
          <ZoomButton aria-label="Zoom in"><svg width="7" height="7" viewBox="0 0 7 7"><path d="M0 3.500h7M3.500 0v7" stroke="#222" strokeWidth="1.500" /></svg></ZoomButton>
        </ZoomCell>
        <StatusCell $plain>100%</StatusCell>
      </StatusBar>
    </App_>
  );
}
